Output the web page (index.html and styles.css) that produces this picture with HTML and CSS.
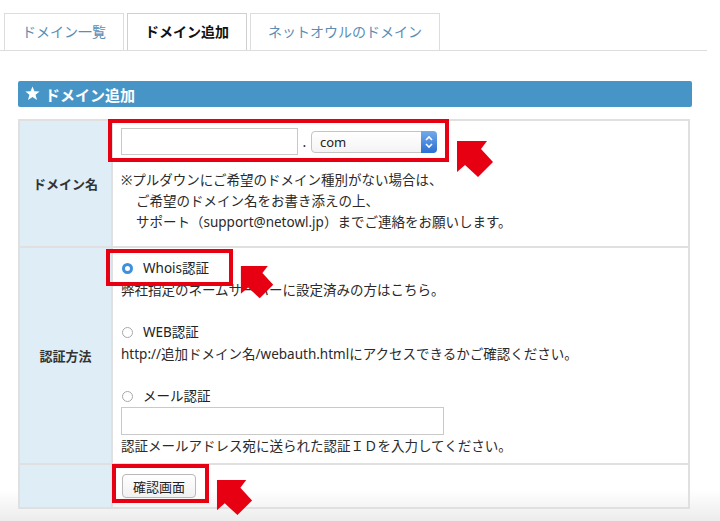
FILE: index.html
```html
<!DOCTYPE html>
<html lang="ja">
<head>
    <meta charset="UTF-8" />
    <meta name="viewport" content="width=device-width, initial-scale=1.0" />
    <title>ドメイン追加</title>
    <link rel="stylesheet" href="styles.css">
</head>
<body>
<div class="page">

    <ul class="tabs">
        <li>ドメイン一覧</li>
        <li class="active">ドメイン追加</li>
        <li>ネットオウルのドメイン</li>
    </ul>

    <div class="panel">
        <h2 class="panel-title">
            <svg class="star" viewBox="0 0 20 20" width="15" height="15"><polygon points="10,0.5 12.6,7 19.5,7.3 14.1,11.6 16,18.5 10,14.6 4,18.5 5.9,11.6 0.5,7.3 7.4,7" fill="#fff"/></svg>
            ドメイン追加
        </h2>

        <table class="form-table">
            <tr class="row-domain">
                <th>ドメイン名</th>
                <td>
                    <div class="domain-input">
                        <input type="text" class="text-input name-input" />
                        <span class="dot">.</span>
                        <div class="select">
                            <span class="select-value">com</span>
                            <span class="stepper">
                                <svg viewBox="0 0 16 22" width="16" height="22"><path d="M5 9 L8 6 L11 9 M5 13 L8 16 L11 13" fill="none" stroke="#fff" stroke-width="1.6"/></svg>
                            </span>
                        </div>
                    </div>
                    <p class="note">
                        ※プルダウンにご希望のドメイン種別がない場合は、<br>
                        <span class="indent">ご希望のドメイン名をお書き添えの上、</span><br>
                        <span class="indent">サポート（support@netowl.jp）までご連絡をお願いします。</span>
                    </p>
                </td>
            </tr>
            <tr class="row-auth">
                <th>認証方法</th>
                <td>
                    <div class="auth-block">
                        <label class="radio"><span class="radio-mark checked"></span>Whois認証</label>
                        <p>弊社指定のネームサーバーに設定済みの方はこちら。</p>
                    </div>
                    <div class="auth-block">
                        <label class="radio"><span class="radio-mark"></span>WEB認証</label>
                        <p>http://追加ドメイン名/webauth.htmlにアクセスできるかご確認ください。</p>
                    </div>
                    <div class="auth-block">
                        <label class="radio"><span class="radio-mark"></span>メール認証</label>
                        <input type="text" class="text-input mail-input" />
                        <p>認証メールアドレス宛に送られた認証ＩＤを入力してください。</p>
                    </div>
                </td>
            </tr>
            <tr class="row-submit">
                <th></th>
                <td><button class="btn">確認画面</button></td>
            </tr>
        </table>
    </div>

    <!-- 注釈 -->
    <div class="mark mark-1"></div>
    <div class="mark mark-2"></div>
    <div class="mark mark-3"></div>
    <svg class="arrow arrow-1" viewBox="0 0 39 39"><polygon points="1,1 31,1 25,9 37,22 22,37 9,25 1,32"/></svg>
    <svg class="arrow arrow-2" viewBox="0 0 39 39"><polygon points="1,1 31,1 25,9 37,22 22,37 9,25 1,32"/></svg>
    <svg class="arrow arrow-3" viewBox="0 0 39 39"><polygon points="1,1 31,1 25,9 37,22 22,37 9,25 1,32"/></svg>
</div>
</body>
</html>
```

FILE: styles.css
```css
html {
    height: 100%;
    background: linear-gradient(to bottom, #fff 0, #fff 490px, #ececec 521px);
}

body {
    margin: 0;
    padding: 0;
    font-family: "Noto Sans", "Noto Sans CJK JP", sans-serif;
    font-size: 13.5px;
    color: #2a2a2a;
}

.page {
    position: relative;
    width: 720px;
    height: 521px;
    overflow: hidden;
}

/* タブ */
.tabs {
    list-style: none;
    margin: 0 13px 0 0;
    padding: 13px 0 0 4px;
    display: flex;
    gap: 3px;
    border-bottom: 1px solid #ddd;
}

.tabs li {
    height: 36px;
    line-height: 36px;
    padding: 0 17px;
    border: 1px solid #ddd;
    border-bottom: none;
    font-size: 14px;
    color: #5b8db5;
}

.tabs li.active {
    color: #111;
    font-weight: bold;
    border-color: #d0d0d0;
}

/* パネル */
.panel {
    margin: 30px 0 0 18px;
    width: 674px;
}

.panel-title {
    margin: 0;
    height: 26px;
    padding-left: 7px;
    display: flex;
    align-items: center;
    gap: 5px;
    background-color: #4795c7;
    border-radius: 2px;
    color: #fff;
    font-size: 15px;
    font-weight: bold;
}

.star {
    margin-top: -1px;
}

.form-table {
    margin-top: 12px;
    width: 672px;
    border-collapse: collapse;
    border: 2px solid #dcdcdc;
}

.form-table th,
.form-table td {
    border: 2px solid #e0e0e0;
    vertical-align: top;
}

.form-table th {
    width: 91px;
    padding: 0;
    background-color: #deedf6;
    vertical-align: middle;
    font-weight: bold;
    font-size: 13px;
    color: #333;
}

.form-table td {
    padding: 0 8px 0 8px;
    text-align: left;
}

.form-table p {
    margin: 0;
}

/* ドメイン名 */
.row-domain td {
    padding-top: 7px;
    padding-bottom: 13px;
}

.domain-input {
    display: flex;
    align-items: center;
}

.text-input {
    box-sizing: border-box;
    border: 1px solid #c9c9c9;
    padding: 0 4px;
    margin: 0;
    font: inherit;
    background: #fff;
}

.name-input {
    width: 177px;
    height: 27px;
}

.dot {
    width: 13px;
    text-align: center;
    font-size: 14px;
}

.select {
    box-sizing: border-box;
    width: 126px;
    height: 22px;
    display: flex;
    justify-content: space-between;
    align-items: center;
    border: 1px solid #c4c4c4;
    border-radius: 4px;
    background: linear-gradient(#fff, #f4f4f4);
}

.select-value {
    padding-left: 8px;
    font-size: 13px;
    color: #222;
}

.stepper {
    display: flex;
    width: 16px;
    height: 22px;
    margin: -1px -1px -1px 0;
    border-radius: 0 4px 4px 0;
    background: linear-gradient(#72aaea, #2b6fd3);
}

.note {
    margin-top: 15px !important;
    line-height: 21px;
}

.indent {
    padding-left: 15px;
}

/* 認証方法 */
.row-auth td {
    padding-top: 9px;
    padding-bottom: 6px;
    line-height: 22px;
}

.auth-block + .auth-block {
    margin-top: 20px;
}

.radio {
    display: flex;
    align-items: center;
    height: 22px;
    color: #222;
}

.radio-mark {
    box-sizing: border-box;
    width: 11px;
    height: 11px;
    margin: 0 10px 0 1px;
    border: 1px solid #a8a8a8;
    border-radius: 50%;
    background: #fff;
}

.radio-mark.checked {
    border: 3.5px solid #3f8fdc;
    background: #fff;
}

.mail-input {
    display: block;
    width: 323px;
    height: 28px;
}

/* 送信 */
.row-submit td {
    padding-top: 9px;
    padding-bottom: 9px;
}

.btn {
    height: 24px;
    padding: 0 10px;
    margin-left: 1px;
    border: 1px solid #b9b9b9;
    border-radius: 4px;
    background: linear-gradient(#fff, #f1f1f1);
    font-family: "Noto Sans", "Noto Sans CJK JP", sans-serif;
    font-size: 13px;
    color: #222;
}

/* 注釈の赤枠と矢印 */
.mark {
    position: absolute;
    box-sizing: border-box;
    border: 4px solid #e60012;
}

.mark-1 {
    left: 108px;
    top: 119px;
    width: 341px;
    height: 43px;
}

.mark-2 {
    left: 106px;
    top: 249px;
    width: 127px;
    height: 37px;
}

.mark-3 {
    left: 112px;
    top: 464px;
    width: 97px;
    height: 39px;
}

.arrow {
    position: absolute;
    fill: #e60012;
}

.arrow-1 {
    left: 456px;
    top: 140px;
    width: 39px;
    height: 39px;
}

.arrow-2 {
    left: 240px;
    top: 265px;
    width: 35px;
    height: 35px;
}

.arrow-3 {
    left: 216px;
    top: 479px;
    width: 38px;
    height: 38px;
}
```
